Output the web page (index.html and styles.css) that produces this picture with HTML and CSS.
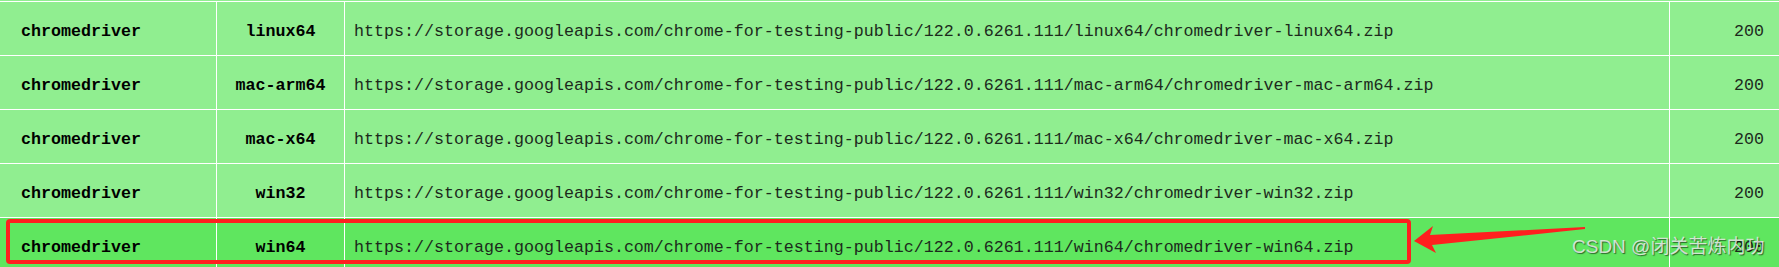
FILE: index.html
```html
<!DOCTYPE html>
<html lang="en">
<head>
<meta charset="utf-8">
<title>chromedriver downloads</title>
<link rel="stylesheet" href="styles.css">
</head>
<body>
<div class="page">
  <div class="table">
    <div class="cell name">chromedriver</div>
    <div class="cell plat">linux64</div>
    <div class="cell url">https://storage.googleapis.com/chrome-for-testing-public/122.0.6261.111/linux64/chromedriver-linux64.zip</div>
    <div class="cell code">200</div>

    <div class="cell name">chromedriver</div>
    <div class="cell plat">mac-arm64</div>
    <div class="cell url">https://storage.googleapis.com/chrome-for-testing-public/122.0.6261.111/mac-arm64/chromedriver-mac-arm64.zip</div>
    <div class="cell code">200</div>

    <div class="cell name">chromedriver</div>
    <div class="cell plat">mac-x64</div>
    <div class="cell url">https://storage.googleapis.com/chrome-for-testing-public/122.0.6261.111/mac-x64/chromedriver-mac-x64.zip</div>
    <div class="cell code">200</div>

    <div class="cell name">chromedriver</div>
    <div class="cell plat">win32</div>
    <div class="cell url">https://storage.googleapis.com/chrome-for-testing-public/122.0.6261.111/win32/chromedriver-win32.zip</div>
    <div class="cell code">200</div>

    <div class="cell name hl">chromedriver</div>
    <div class="cell plat hl">win64</div>
    <div class="cell url hl">https://storage.googleapis.com/chrome-for-testing-public/122.0.6261.111/win64/chromedriver-win64.zip</div>
    <div class="cell code hl">200</div>
  </div>

  <div class="mark-box"></div>
  <svg class="mark-arrow" width="1779" height="267" viewBox="0 0 1779 267">
    <polygon points="1414,241 1433,226 1430,235 1585,227 1585,229 1432,245 1436,253" fill="#ff1f1f"/>
  </svg>
  <div class="watermark">CSDN @闭关苦炼内功</div>
</div>
</body>
</html>
```

FILE: styles.css
```css
html, body {
  margin: 0;
  padding: 0;
  width: 1779px;
  height: 267px;
  overflow: hidden;
  background: #90ee90;
}

.page {
  position: relative;
  width: 1779px;
  height: 267px;
  overflow: hidden;
  border-top: 1px solid #90ee90;
  box-sizing: border-box;
}

.table {
  display: grid;
  grid-template-columns: 216px 127px 1324px 109px;
  grid-auto-rows: 53px;
  gap: 1px;
  background: #ffffff;
  padding-top: 1px;
}

.cell {
  display: flex;
  align-items: center;
  padding-top: 6px;
  box-sizing: border-box;
  background: #90ee90;
  font-family: "Liberation Mono", "DejaVu Sans Mono", monospace;
  font-size: 16.67px;
  color: #111;
  white-space: nowrap;
}

.cell.hl {
  background: #5fe65f;
}

.name {
  font-weight: bold;
  color: #000;
  padding-left: 21px;
}

.plat {
  font-weight: bold;
  color: #000;
  justify-content: center;
}

.url {
  padding-left: 9px;
  color: #1c2a1c;
}

.code {
  justify-content: flex-end;
  padding-right: 15px;
  color: #1c2a1c;
}

.mark-box {
  position: absolute;
  left: 6px;
  top: 218px;
  width: 1405px;
  height: 45px;
  border: 4px solid #ff1f1f;
  border-radius: 4px;
  box-sizing: border-box;
}

.mark-arrow {
  position: absolute;
  left: 0;
  top: -1px;
}

.watermark {
  position: absolute;
  left: 1572px;
  top: 235px;
  font-family: "Liberation Sans", "Noto Sans CJK SC", sans-serif;
  font-size: 19px;
  line-height: 22px;
  color: rgba(235, 235, 235, 0.85);
  text-shadow: 1px 1px 1px rgba(0, 0, 0, 0.55);
  white-space: nowrap;
}
```
